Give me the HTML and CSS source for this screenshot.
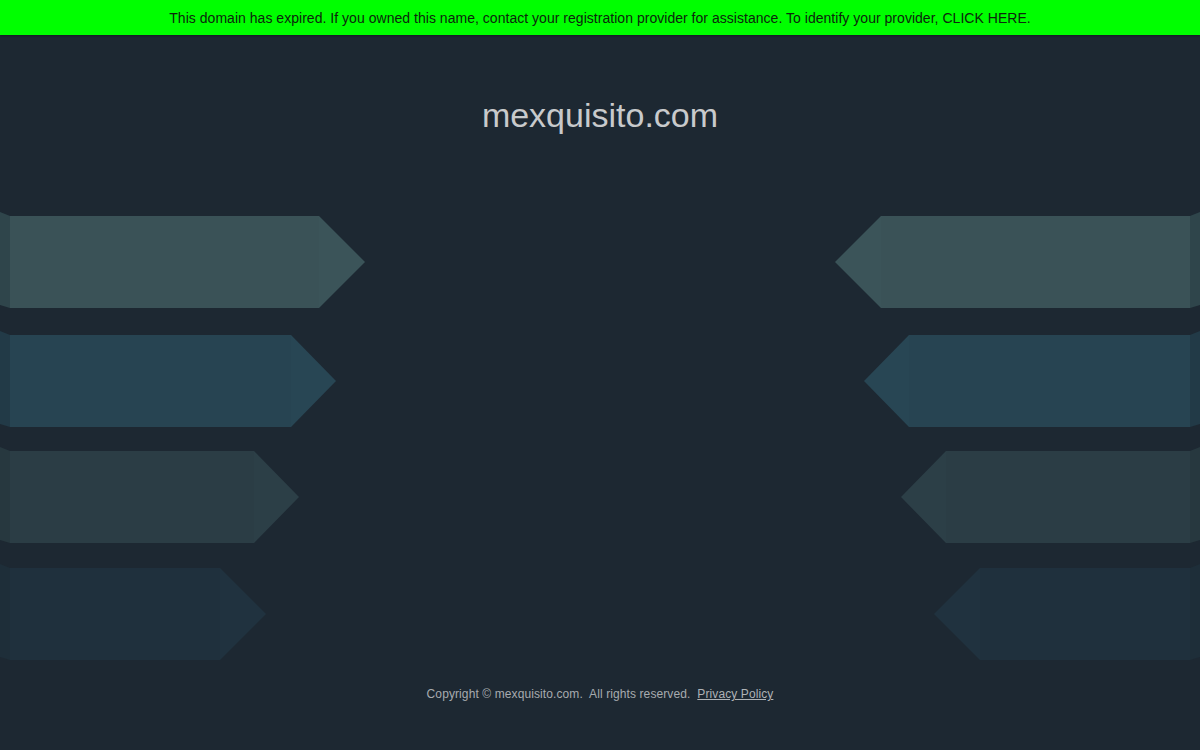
FILE: index.html
```html
<!DOCTYPE html>
<html lang="en">
<head>
<meta charset="utf-8">
<title>mexquisito.com</title>
<link rel="stylesheet" href="styles.css">
</head>
<body>
<div class="banner">This domain has expired. If you owned this name, contact your registration provider for assistance. To identify your provider, <a class="banner-link" href="#">CLICK HERE</a>.</div>
<h1 class="title">mexquisito.com</h1>
<div class="arrows">
  <svg class="arrow-set" width="366" height="450" viewBox="0 0 366 450">
    <polygon fill="#2f454b" points="0,0 10,4 10,96 0,93"/>
    <rect fill="#3a5257" x="10" y="4" width="309" height="92"/>
    <polygon fill="#3b5459" points="319,4 365,50 319,96"/>

    <polygon fill="#223a47" points="0,119 10,123 10,215 0,212"/>
    <rect fill="#274452" x="10" y="123" width="281" height="92"/>
    <polygon fill="#284654" points="291,123 336,169 291,215"/>

    <polygon fill="#27383f" points="0,235 10,239 10,331 0,328"/>
    <rect fill="#2b3d45" x="10" y="239" width="244" height="92"/>
    <polygon fill="#2c3f47" points="254,239 299,285 254,331"/>

    <polygon fill="#1e2e39" points="0,352 10,356 10,448 0,445"/>
    <rect fill="#1f303d" x="10" y="356" width="210" height="92"/>
    <polygon fill="#20323f" points="220,356 266,402 220,448"/>
  </svg>
  <svg class="arrow-set flip" width="366" height="450" viewBox="0 0 366 450">
    <polygon fill="#2f454b" points="0,0 10,4 10,96 0,93"/>
    <rect fill="#3a5257" x="10" y="4" width="309" height="92"/>
    <polygon fill="#3b5459" points="319,4 365,50 319,96"/>

    <polygon fill="#223a47" points="0,119 10,123 10,215 0,212"/>
    <rect fill="#274452" x="10" y="123" width="281" height="92"/>
    <polygon fill="#284654" points="291,123 336,169 291,215"/>

    <polygon fill="#27383f" points="0,235 10,239 10,331 0,328"/>
    <rect fill="#2b3d45" x="10" y="239" width="244" height="92"/>
    <polygon fill="#2c3f47" points="254,239 299,285 254,331"/>

    <polygon fill="#1e2e39" points="0,352 10,356 10,448 0,445"/>
    <rect fill="#1f303d" x="10" y="356" width="210" height="92"/>
    <polygon fill="#20323f" points="220,356 266,402 220,448"/>
  </svg>
</div>
<footer class="footer">Copyright © mexquisito.com.&nbsp; All rights reserved.&nbsp; <a class="footer-link" href="#">Privacy Policy</a></footer>
</body>
</html>
```
FILE: styles.css
```css
html, body {
  margin: 0;
  padding: 0;
}
body {
  background: #1d2832;
  font-family: "Liberation Sans", Arial, sans-serif;
  width: 1200px;
  height: 750px;
  overflow: hidden;
}
.banner {
  height: 35px;
  line-height: 37px;
  background: #00ff00;
  color: #0d260d;
  font-size: 14px;
  letter-spacing: 0.03px;
  text-align: center;
  box-shadow: 0 1px 2px rgba(0,0,0,0.3);
}
.banner-link {
  color: inherit;
  text-decoration: none;
}
.title {
  margin: 0;
  padding-top: 60px;
  height: 117px;
  line-height: 40px;
  font-size: 34px;
  font-weight: normal;
  color: #c8cacc;
  text-align: center;
}
.arrows {
  display: flex;
  justify-content: space-between;
}
.arrow-set {
  display: block;
}
.flip {
  transform: scaleX(-1);
}
.footer {
  margin-top: 24px;
  text-align: center;
  font-size: 12px;
  line-height: 16px;
  letter-spacing: 0.1px;
  color: #a7abaf;
}
.footer-link {
  color: #aeb2b6;
  text-decoration: underline;
}
```
